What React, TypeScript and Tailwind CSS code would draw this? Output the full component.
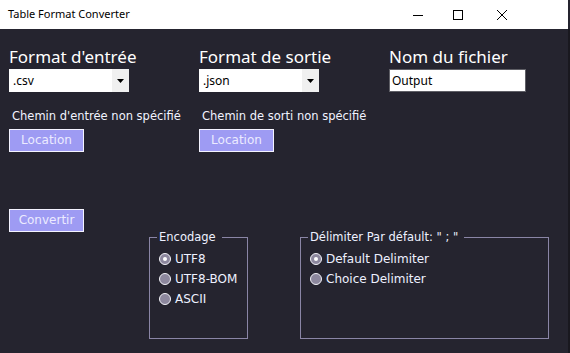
import React from 'react';

const ui = { fontFamily: '"Noto Sans", "Open Sans", sans-serif' };
const px = { fontFamily: '"DejaVu Sans", "Noto Sans", sans-serif' };

function Combo({ value }: { value: string }) {
  return (
    <div className="flex h-[23px] w-[120px] bg-white">
      <span className="flex-1 pl-[4px] text-[12px] leading-[23px] text-black" style={ui}>{value}</span>
      <span className="flex w-[17px] items-center justify-center bg-[#f0f0f0]">
        <svg width="7" height="4" viewBox="0 0 7 4"><path d="M0 0h7L3.5 4z" fill="#000" /></svg>
      </span>
    </div>
  );
}

function Btn({ label }: { label: string }) {
  return (
    <button className="block h-[23px] w-[75px] border border-[#f4f3ff] bg-[#9e9bf3] text-[12px] leading-[21px] text-[#ecebff]" style={px}>
      {label}
    </button>
  );
}

function Radio({ label, checked }: { label: string; checked?: boolean }) {
  return (
    <div className="flex h-[20px] items-center gap-[4px]">
      <span className="flex h-[12px] w-[12px] items-center justify-center rounded-full border border-[#f2f2f8] bg-[#8c879d]">
        {checked && <span className="h-[4px] w-[4px] rounded-full bg-white" />}
      </span>
      <span className="text-[12px] text-[#eef1ff]" style={px}>{label}</span>
    </div>
  );
}

function Group({ label, width, children }: { label: string; width: string; children: React.ReactNode }) {
  return (
    <fieldset className={`mt-[20px] h-[110px] border border-[#8a85a6] p-0 ${width}`}>
      <legend className="ml-[7px] pl-[2px] pr-[6px] text-[11.5px] leading-[16px] text-[#eef1ff]" style={px}>{label}</legend>
      <div className="mt-[4px] pl-[9px]">{children}</div>
    </fieldset>
  );
}

function Field({ label, children }: { label: string; children: React.ReactNode }) {
  return (
    <div className="flex w-[190px] flex-col">
      <span className="h-[20px] text-[17px] leading-[20px] text-white" style={ui}>{label}</span>
      <div className="mt-[2px]">{children}</div>
    </div>
  );
}

export default function App() {
  return (
    <div className="flex h-[353px] w-[570px] flex-col overflow-hidden bg-[#25242f]">
      <div className="flex h-[29px] w-[568px] shrink-0 items-center bg-white">
        <span className="pl-[8px] text-[11px] text-black" style={ui}>Table Format Converter</span>
        <div className="ml-auto flex items-center pr-[61px]">
          <svg width="10" height="10" viewBox="0 0 10 10"><path d="M0 5.5h10" stroke="#000" /></svg>
          <svg className="ml-[30px]" width="10" height="10" viewBox="0 0 10 10"><rect x="0.5" y="0.5" width="9" height="9" fill="none" stroke="#000" /></svg>
          <svg className="ml-[34px]" width="10" height="10" viewBox="0 0 10 10"><path d="M0 0l10 10M10 0L0 10" stroke="#000" /></svg>
        </div>
      </div>

      <div className="flex flex-1 border-r-2 border-[#19181f]">
        <div className="flex flex-1 flex-col pl-[9px] pt-[18px]">
          <div className="flex">
            <Field label="Format d'entrée"><Combo value=".csv" /></Field>
            <Field label="Format de sortie"><Combo value=".json" /></Field>
            <Field label="Nom du fichier">
              <div className="h-[23px] w-[137px] border border-[#5f5f66] bg-white pl-[2px] text-[12px] leading-[21px] text-black" style={ui}>
                Output
              </div>
            </Field>
          </div>

          <div className="mt-[16px] flex">
            {["Chemin d'entrée non spécifié", 'Chemin de sorti non spécifié'].map((t) => (
              <div key={t} className="flex w-[190px] flex-col">
                <span className="h-[16px] pl-[3px] text-[11.5px] leading-[16px] text-[#f1f3ff]" style={px}>{t}</span>
                <div className="mt-[5px]"><Btn label="Location" /></div>
              </div>
            ))}
          </div>

          <div className="mt-[57px] flex items-start">
            <div className="w-[140px]"><Btn label="Convertir" /></div>
            <Group label="Encodage" width="w-[99px]">
              <Radio label="UTF8" checked />
              <Radio label="UTF8-BOM" />
              <Radio label="ASCII" />
            </Group>
            <div className="w-[52px]" />
            <Group label={'Délimiter Par défault: " ; "'} width="w-[249px]">
              <Radio label="Default Delimiter" checked />
              <Radio label="Choice Delimiter" />
            </Group>
          </div>
        </div>
      </div>
    </div>
  );
}
